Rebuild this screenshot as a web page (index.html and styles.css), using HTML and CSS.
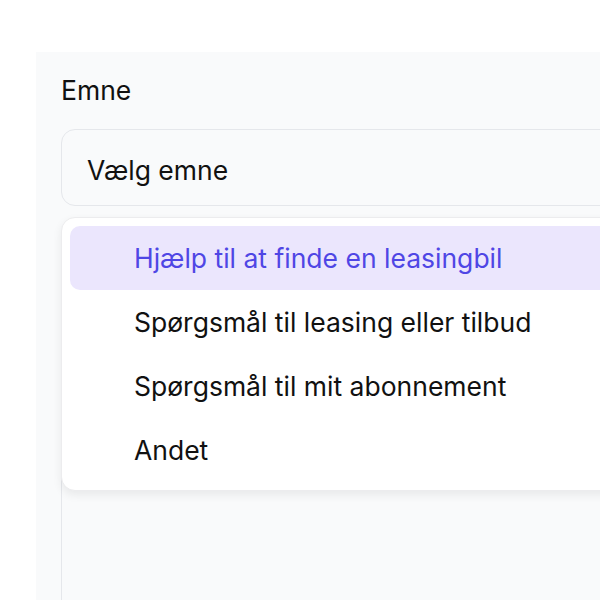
FILE: index.html
```html
<!DOCTYPE html>
<html lang="da">
<head>
    <meta charset="UTF-8">
    <meta name="viewport" content="width=device-width, initial-scale=1.0">
    <title>Kontakt</title>
    <link rel="stylesheet" href="styles.css">
</head>
<body>
    <div class="panel">
        <div class="field">
            <label class="label" for="topic">Emne</label>
            <div class="select" id="topic">Vælg emne</div>

            <!-- Open dropdown -->
            <ul class="dropdown">
                <li class="option active">Hjælp til at finde en leasingbil</li>
                <li class="option">Spørgsmål til leasing eller tilbud</li>
                <li class="option">Spørgsmål til mit abonnement</li>
                <li class="option">Andet</li>
            </ul>
        </div>
        <div class="textarea"></div>
    </div>
</body>
</html>
```

FILE: styles.css
```css
html, body {
    overflow: hidden;
}
body {
    margin: 0;
    padding: 52px 0 0 36px;
    background-color: #fff;
    font-family: Inter, "Noto Sans", sans-serif;
    color: #111;
    height: 548px;
    width: 564px;
}
.panel {
    background-color: #f9fafb;
    padding: 22px 0 0 25px;
    margin-right: -200px;
    height: 100%;
}
.field {
    position: relative;
}
.label {
    display: block;
    font-size: 26.5px;
    line-height: 32px;
    margin-bottom: 23px;
}
.select {
    height: 69px;
    border: 1px solid #e5e7eb;
    border-radius: 14px;
    background-color: #f9fafb;
    padding: 6px 0 0 25px;
    font-size: 26.5px;
    line-height: 69px;
}
.dropdown {
    position: absolute;
    top: 143px;
    left: 0;
    right: 0;
    margin: 0;
    padding: 8px;
    list-style: none;
    background-color: #fff;
    border: 1px solid #ececee;
    border-radius: 14px;
    box-shadow: 0 4px 10px rgba(0, 0, 0, 0.07);
}
.option {
    height: 64px;
    line-height: 64px;
    padding-left: 64px;
    font-size: 26.5px;
    border-radius: 10px;
}
.active {
    background-color: #ebe6fd;
    color: #4f46e5;
}
.textarea {
    margin-top: 24px;
    height: 400px;
    border: 1px solid #e5e7eb;
    border-radius: 14px;
    background-color: #f9fafb;
}
```
